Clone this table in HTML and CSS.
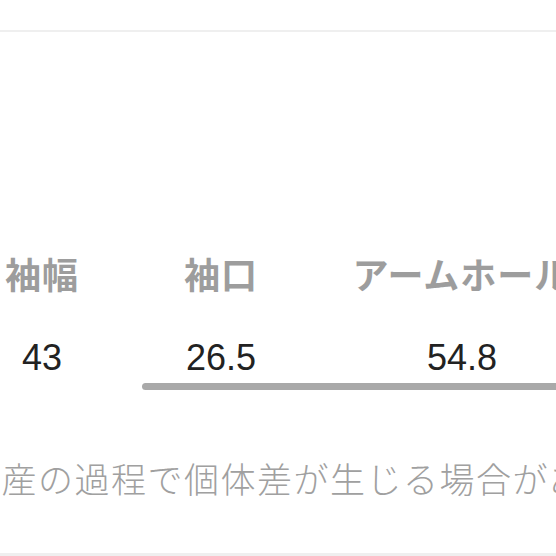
FILE: index.html
```html
<!DOCTYPE html>
<html lang="ja">
<head>
<meta charset="utf-8">
<link rel="stylesheet" href="styles.css">
</head>
<body>
<div class="page">
  <div class="rule top"></div>
  <div class="scroller">
    <div class="table">
      <div class="cell head">袖幅</div>
      <div class="cell head">袖口</div>
      <div class="cell head">アームホール</div>
      <div class="cell val">43</div>
      <div class="cell val">26.5</div>
      <div class="cell val">54.8</div>
    </div>
    <div class="track"><div class="thumb"></div></div>
  </div>
  <div class="note"><span class="note-inner">生産の過程で個体差が生じる場合があります。</span></div>
  <div class="rule bottom"></div>
</div>
</body>
</html>
```

FILE: styles.css
```css
html, body {
  margin: 0;
  padding: 0;
  background: #ffffff;
}
.page {
  width: 556px;
  height: 556px;
  overflow: hidden;
  display: flex;
  flex-direction: column;
}
.rule {
  height: 2px;
  background: #efefef;
  flex: none;
}
.rule.top {
  margin-top: 30px;
}
.scroller {
  margin-top: 216px;
  overflow: hidden;
}
.table {
  display: grid;
  grid-template-columns: 178px 180px 302px;
  grid-template-rows: 50px 40px;
  row-gap: 40px;
  margin-left: -47px;
  width: 660px;
}
.cell {
  text-align: center;
  white-space: nowrap;
}
.head {
  font-family: "Noto Sans CJK JP", sans-serif;
  font-size: 36px;
  line-height: 50px;
  letter-spacing: 1px;
  font-weight: 700;
  color: #9d9d9d;
}
.val {
  font-family: "Liberation Sans", Arial, sans-serif;
  font-size: 36px;
  line-height: 40px;
  color: #222222;
}
.track {
  margin-top: 5px;
  height: 7px;
  padding-left: 142px;
}
.thumb {
  height: 7px;
  background: #a9a9a9;
  border-radius: 4px 0 0 4px;
}
.note {
  margin-top: 63px;
  overflow: hidden;
  white-space: nowrap;
  font-family: "Noto Sans CJK JP", sans-serif;
  font-size: 35px;
  line-height: 50px;
  letter-spacing: 1.5px;
  color: #a0a0a0;
  font-weight: 300;
}
.note-inner {
  display: block;
  margin-left: -35px;
}
.rule.bottom {
  margin-top: 50px;
  height: 3px;
}
```
